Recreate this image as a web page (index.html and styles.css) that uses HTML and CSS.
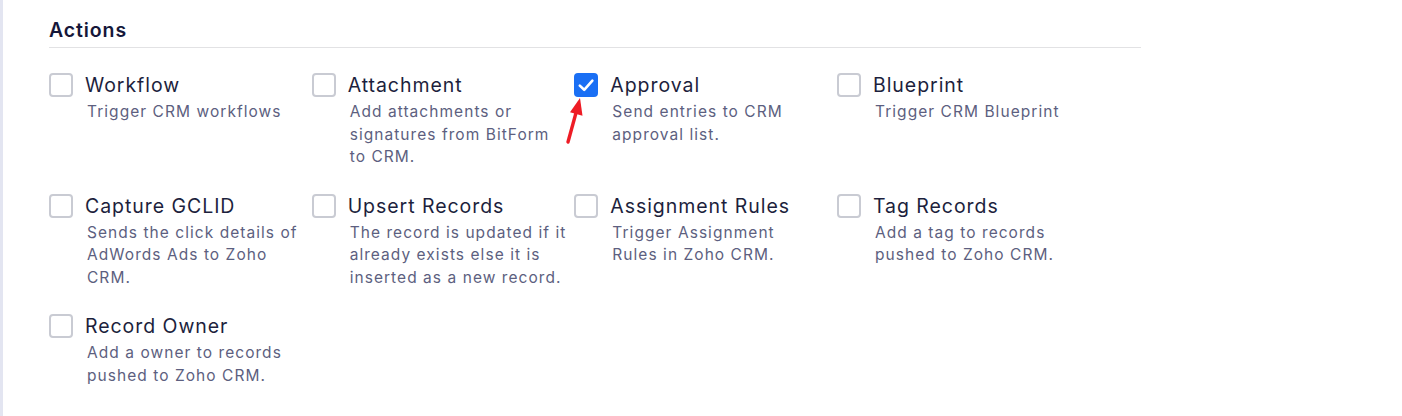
FILE: index.html
```html
<!DOCTYPE html>
<html lang="en">
<head>
<meta charset="utf-8">
<title>Actions</title>
<link rel="stylesheet" href="styles.css">
</head>
<body>
<div class="page">
  <section class="actions">
    <h2 class="actions-title">Actions</h2>
    <div class="action-grid">
      <div class="action">
        <span class="check"></span>
        <span class="action-name">Workflow</span>
        <p class="action-desc">Trigger CRM workflows</p>
      </div>
      <div class="action">
        <span class="check"></span>
        <span class="action-name">Attachment</span>
        <p class="action-desc">Add attachments or<br>signatures from BitForm<br>to CRM.</p>
      </div>
      <div class="action">
        <span class="check checked">
          <svg viewBox="0 0 24 24" width="24" height="24"><polyline points="5.8,12.6 10.2,16.8 18.4,7.6" fill="none" stroke="#fff" stroke-width="2.6" stroke-linecap="round" stroke-linejoin="round"/></svg>
        </span>
        <span class="action-name">Approval</span>
        <p class="action-desc">Send entries to CRM<br>approval list.</p>
        <svg class="pointer" viewBox="0 0 30 50" width="30" height="50">
          <line x1="8" y1="46" x2="16.5" y2="15" stroke="#ee1c25" stroke-width="3.4" stroke-linecap="round"/>
          <polygon points="20,2 22.5,19.8 10,16.3" fill="#ee1c25"/>
        </svg>
      </div>
      <div class="action">
        <span class="check"></span>
        <span class="action-name">Blueprint</span>
        <p class="action-desc">Trigger CRM Blueprint</p>
      </div>
      <div class="action">
        <span class="check"></span>
        <span class="action-name">Capture GCLID</span>
        <p class="action-desc">Sends the click details of<br>AdWords Ads to Zoho<br>CRM.</p>
      </div>
      <div class="action">
        <span class="check"></span>
        <span class="action-name">Upsert Records</span>
        <p class="action-desc">The record is updated if it<br>already exists else it is<br>inserted as a new record.</p>
      </div>
      <div class="action">
        <span class="check"></span>
        <span class="action-name">Assignment Rules</span>
        <p class="action-desc">Trigger Assignment<br>Rules in Zoho CRM.</p>
      </div>
      <div class="action">
        <span class="check"></span>
        <span class="action-name">Tag Records</span>
        <p class="action-desc">Add a tag to records<br>pushed to Zoho CRM.</p>
      </div>
      <div class="action">
        <span class="check"></span>
        <span class="action-name">Record Owner</span>
        <p class="action-desc">Add a owner to records<br>pushed to Zoho CRM.</p>
      </div>
    </div>
  </section>
</div>
</body>
</html>
```
FILE: styles.css
```css
html, body {
  margin: 0;
  padding: 0;
  background: #fff;
}
body {
  font-family: Inter, "Open Sans", sans-serif;
  color: #1d1f3d;
}
.page {
  min-height: 416px;
  box-sizing: border-box;
  border-left: 3px solid #e3e5f1;
  padding: 17px 0 0 46px;
}
.actions {
  width: 1092px;
}
.actions-title {
  margin: 0;
  font-size: 19.5px;
  line-height: 26px;
  font-weight: 600;
  letter-spacing: 0.9px;
  color: #15173a;
  padding-bottom: 4px;
  border-bottom: 1px solid #e2e2e4;
}
.action-grid {
  margin-top: 25px;
  display: grid;
  grid-template-columns: repeat(4, 262.67px);
  row-gap: 25px;
}
.action {
  position: relative;
  display: grid;
  grid-template-columns: 24px 1fr;
  column-gap: 12px;
  align-content: start;
}
.check {
  width: 24px;
  height: 24px;
  box-sizing: border-box;
  border: 2px solid #c9cbd3;
  border-radius: 4px;
  background: #fff;
}
.check.checked {
  border: none;
  background: #1a6ff4;
}
.check svg {
  display: block;
}
.action-name {
  font-size: 19.5px;
  line-height: 24px;
  letter-spacing: 0.95px;
  color: #1d1f3d;
  white-space: nowrap;
}
.action-desc {
  grid-column: 2;
  margin: 4px 0 0 2px;
  font-size: 15.5px;
  line-height: 22.5px;
  letter-spacing: 1.05px;
  color: #5d5f80;
  white-space: nowrap;
}
.pointer {
  position: absolute;
  left: -14px;
  top: 23px;
}
```
